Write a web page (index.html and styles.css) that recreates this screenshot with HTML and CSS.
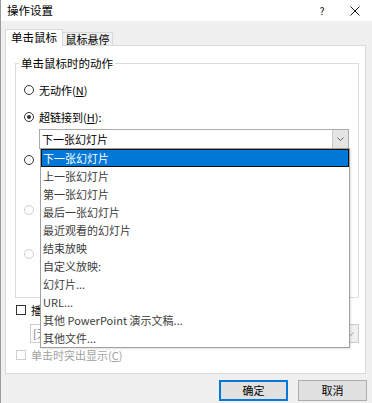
FILE: index.html
```html
<!DOCTYPE html>
<html lang="zh-CN">
<head>
<meta charset="utf-8">
<title>操作设置</title>
<link rel="stylesheet" href="styles.css">
</head>
<body>
<div class="window">
  <div class="titlebar">
    <span class="title">操作设置</span>
    <span class="help">?</span>
    <span class="close"><svg width="10" height="10" viewBox="0 0 10 10"><path d="M0.5 0.5L9.5 9.5M9.5 0.5L0.5 9.5" stroke="#1a1a1a" stroke-width="1" fill="none"/></svg></span>
  </div>
  <div class="content">
    <div class="tabs">
      <div class="tab active">单击鼠标</div>
      <div class="tab">鼠标悬停</div>
    </div>
    <div class="panel">
      <fieldset class="group">
        <legend>单击鼠标时的动作</legend>
        <div class="opt r1"><span class="radio"></span><span class="lbl">无动作(<u>N</u>)</span></div>
        <div class="opt r2"><span class="radio checked"></span><span class="lbl">超链接到(<u>H</u>):</span></div>
        <div class="combo main-combo">
          <span class="combo-text">下一张幻灯片</span>
          <span class="combo-btn"><svg width="7" height="4" viewBox="0 0 7 4"><path d="M0.5 0.5L3.5 3.5L6.5 0.5" stroke="#606060" stroke-width="1" fill="none"/></svg></span>
        </div>
        <div class="opt r3"><span class="radio"></span></div>
        <div class="opt r4"><span class="radio disabled"></span></div>
        <div class="opt r5"><span class="radio disabled"></span></div>
      </fieldset>
      <div class="opt chk1"><span class="check"></span><span class="lbl">播</span></div>
      <div class="combo sound-combo">
        <span class="combo-text">[无</span>
        <span class="combo-btn"><svg width="7" height="4" viewBox="0 0 7 4"><path d="M0.5 0.5L3.5 3.5L6.5 0.5" stroke="#9a9a9a" stroke-width="1" fill="none"/></svg></span>
      </div>
      <div class="opt chk2"><span class="check disabled"></span><span class="lbl dim">单击时突出显示(<u>C</u>)</span></div>
    </div>
    <div class="buttons">
      <div class="btn default">确定</div>
      <div class="btn">取消</div>
    </div>
  </div>
  <ul class="dropdown">
    <li class="sel">下一张幻灯片</li>
    <li>上一张幻灯片</li>
    <li>第一张幻灯片</li>
    <li>最后一张幻灯片</li>
    <li>最近观看的幻灯片</li>
    <li>结束放映</li>
    <li>自定义放映:</li>
    <li>幻灯片...</li>
    <li>URL...</li>
    <li>其他 PowerPoint 演示文稿...</li>
    <li>其他文件...</li>
  </ul>
</div>
</body>
</html>
```

FILE: styles.css
```css
* { box-sizing: border-box; }
html, body {
  margin: 0;
  padding: 0;
  width: 372px;
  height: 403px;
  overflow: hidden;
  background: #f0f0f0;
}
body {
  font-family: "Noto Sans CJK SC", "Noto Sans", sans-serif;
  font-size: 11px;
  color: #000;
}
.window {
  position: relative;
  width: 372px;
  height: 403px;
  background: #f0f0f0;
  border-left: 1px solid #9c9c9c;
}
.titlebar {
  height: 21px;
  background: #fff;
  display: flex;
  align-items: center;
  padding-left: 6px;
  line-height: 21px;
}
.title { flex: 1; font-size: 11.5px; }
.help {
  width: 32px;
  text-align: center;
  font-size: 10px;
}
.close {
  width: 34px;
  height: 21px;
  display: flex;
  align-items: center;
  justify-content: center;
}
.close svg { display: block; }
.content { padding-left: 4px; }
.tabs {
  display: flex;
  align-items: flex-end;
  margin-top: 8px;
  height: 16px;
}
.tab {
  width: 50px;
  height: 13px;
  line-height: 12px;
  text-align: center;
  border: 1px solid #d9d9d9;
  border-bottom: none;
  border-left: none;
  background: #f0f0f0;
}
.tab.active {
  position: relative;
  z-index: 1;
  width: 58px;
  height: 17px;
  margin-bottom: -1px;
  line-height: 15px;
  background: #fff;
  border-left: 1px solid #d9d9d9;
  font-size: 11.5px;
}
.panel {
  width: 361px;
  height: 329px;
  background: #fff;
  border: 1px solid #d9d9d9;
  display: flex;
  flex-direction: column;
}
.group {
  margin: 11px 6px 0 9px;
  padding: 0 0 36px 0;
  border: 1px solid #dcdcdc;
  min-width: 0;
}
.group legend {
  margin-left: 3px;
  padding: 0 2px;
  line-height: 12px;
  font-size: 11.5px;
}
.opt {
  display: flex;
  align-items: center;
  height: 14px;
  line-height: 14px;
}
.lbl { margin-left: 5px; white-space: nowrap; }
.dim { color: #a0a0a0; }
.radio {
  width: 10px;
  height: 10px;
  border: 1px solid #333;
  border-radius: 50%;
  display: flex;
  align-items: center;
  justify-content: center;
  flex: none;
}
.radio.checked::after {
  content: "";
  width: 4px;
  height: 4px;
  border-radius: 50%;
  background: #333;
}
.radio.disabled { border-color: #cfcfcf; }
.r1, .r2, .r3, .r4, .r5 { margin-left: 8px; }
.r1 { margin-top: 14px; }
.r2 { margin-top: 13px; }
.r3 { margin-top: 4px; }
.r4 { margin-top: 36px; }
.r5 { margin-top: 30px; }
.check {
  width: 10px;
  height: 10px;
  border: 1px solid #333;
  flex: none;
}
.check.disabled { border-color: #cfcfcf; }
.chk1 { margin: 5px 0 0 10px; }
.chk2 { margin: 5px 0 0 10px; }
.combo {
  display: flex;
  align-items: stretch;
  background: #fff;
  border: 1px solid #ababab;
}
.combo-text {
  flex: 1;
  padding-left: 2px;
  white-space: nowrap;
  overflow: hidden;
}
.combo-btn {
  width: 16px;
  display: flex;
  align-items: center;
  justify-content: center;
  background: #e5e5e5;
  border-left: 1px solid #c8c8c8;
}
.combo-btn svg { display: block; }
.main-combo {
  margin: 5px 0 0 23px;
  width: 310px;
  height: 20px;
  line-height: 18px;
}
.sound-combo {
  margin: 7px 0 0 24px;
  width: 329px;
  height: 19px;
  line-height: 17px;
  border-color: #cccccc;
}
.sound-combo .combo-text { color: #7a7a7a; padding-left: 2px; }
.sound-combo .combo-btn { background: #f0f0f0; border-left-color: #d5d5d5; }
.buttons {
  display: flex;
  justify-content: flex-end;
  gap: 10px;
  margin-top: 6px;
  padding-right: 5px;
}
.btn {
  width: 69px;
  height: 21px;
  line-height: 19px;
  text-align: center;
  background: #e1e1e1;
  border: 1px solid #adadad;
}
.btn.default {
  border-color: #0078d7;
  box-shadow: inset 0 0 0 1px #0078d7;
}
.dropdown {
  position: absolute;
  left: 39px;
  top: 148px;
  width: 310px;
  height: 200px;
  margin: 0;
  padding: 0;
  list-style: none;
  background: #fff;
  border: 1px solid #a0a0a0;
  box-shadow: 1px 1px 2px rgba(0, 0, 0, 0.12);
  z-index: 5;
}
.dropdown li {
  height: 18px;
  line-height: 18px;
  padding-left: 2px;
  color: #3c3c3c;
  white-space: nowrap;
}
.dropdown li.sel {
  background: #0078d7;
  color: #fff;
  box-shadow: inset 0 0 0 1px #111;
}
```
